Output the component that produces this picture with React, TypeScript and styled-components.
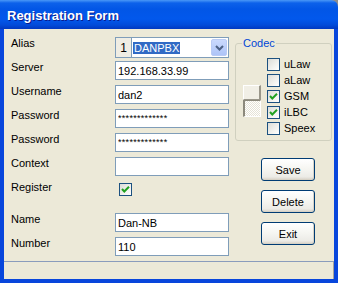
import styled, { createGlobalStyle } from "styled-components";

const GlobalStyle = createGlobalStyle`
  html, body {
    margin: 0;
    padding: 0;
    background: #8c8c8c;
  }
  body {
    font-family: "Liberation Sans", Arial, sans-serif;
    font-size: 11px;
  }
`;

const Window = styled.div`
  width: 338px;
  height: 283px;
  display: flex;
  flex-direction: column;
  overflow: hidden;
  border-top-right-radius: 7px;
`;

const TitleBar = styled.div`
  height: 29px;
  flex: none;
  display: flex;
  align-items: center;
  padding: 2px 0 0 7px;
  box-sizing: border-box;
  background: linear-gradient(
    180deg,
    #4a98f7 0px,
    #0c61ea 3px,
    #0256e6 9px,
    #0258ec 19px,
    #024bd9 25px,
    #0138c0 29px
  );
  color: #fff;
  font-family: "Liberation Sans", Arial, sans-serif;
  font-weight: bold;
  font-size: 13px;
  text-shadow: 1px 1px 0 #0a1a8c;
`;

const Frame = styled.div`
  flex: 1;
  display: flex;
  flex-direction: column;
  border: 4px solid #0846dc;
  border-top: none;
  box-shadow: inset 1px 0 0 #1459e8, inset -1px 0 0 #1459e8;
`;

const Body = styled.div`
  height: 232px;
  display: flex;
  background: #ece9d8;
`;

const FormColumn = styled.div`
  display: flex;
  flex-direction: column;
  padding: 8px 0 0 7px;
`;

const Row = styled.div<{ $height?: number; $mb?: number }>`
  display: flex;
  height: ${({ $height }) => $height ?? 19}px;
  margin-bottom: ${({ $mb }) => $mb ?? 5}px;
`;

const Label = styled.span`
  width: 104px;
  line-height: 13px;
  color: #000;
`;

const TextBox = styled.input<{ $small?: boolean }>`
  width: 114px;
  height: 19px;
  box-sizing: border-box;
  margin: 0;
  border: 1px solid #7f9db9;
  background: #fff;
  padding: ${({ $small }) => ($small ? "0 2px 2px" : "0 2px")};
  font-family: "Liberation Sans", Arial, sans-serif;
  font-size: ${({ $small }) => ($small ? "9px" : "11px")};
  letter-spacing: ${({ $small }) => ($small ? "0.3px" : "0")};
  color: #000;
  outline: none;
`;

const Combo = styled.div`
  width: 114px;
  height: 21px;
  box-sizing: border-box;
  border: 1px solid #7f9db9;
  display: flex;
  background: #fff;
`;

const ComboIndex = styled.div`
  width: 15px;
  border-right: 1px solid #7f9db9;
  background: #efede4;
  display: flex;
  align-items: center;
  justify-content: center;
  font-size: 12px;
`;

const ComboField = styled.div`
  flex: 1;
  display: flex;
  align-items: center;
  justify-content: space-between;
  padding: 0 1px 0 1px;
`;

const Selected = styled.span`
  background: #316ac5;
  color: #fff;
  padding: 0 1px;
  line-height: 12px;
`;

const DropButton = styled.div`
  width: 16px;
  height: 17px;
  box-sizing: border-box;
  border: 1px solid #bacbf5;
  border-radius: 2px;
  background: linear-gradient(180deg, #cad9fd 0%, #b9cdfa 60%, #aec4f7 100%);
  display: flex;
  align-items: center;
  justify-content: center;
`;

const CheckBox = styled.div<{ $checked?: boolean }>`
  width: 13px;
  height: 13px;
  box-sizing: border-box;
  border: 1px solid #1c5180;
  background: linear-gradient(135deg, #dcdcd7 0%, #f2f2ef 60%, #ffffff 100%);
  display: flex;
  align-items: center;
  justify-content: center;
  flex: none;
`;

const RegisterBox = styled.div`
  padding: 2px 0 0 4px;
`;

const SideColumn = styled.div`
  display: flex;
  flex-direction: column;
  padding: 8px 0 0 6px;
`;

const Group = styled.fieldset`
  width: 97px;
  height: 104px;
  box-sizing: border-box;
  margin: 0;
  padding: 6px 0 0 0;
  border: 1px solid #d0d0bf;
  border-radius: 3px;
  display: flex;
  align-items: flex-start;
`;

const Legend = styled.legend`
  margin-left: 6px;
  padding: 0 1px;
  color: #0046d5;
  font-size: 11px;
  line-height: 13px;
`;

const Slider = styled.div`
  display: flex;
  flex-direction: column;
  margin: 29px 0 0 7px;
`;

const SliderUp = styled.div`
  width: 18px;
  height: 15px;
  box-sizing: border-box;
  background: #f1efe6;
  border-top: 1px solid #fff;
  border-left: 1px solid #fff;
  border-right: 2px solid #99968a;
  border-bottom: 1px solid #99968a;
`;

const SliderDown = styled.div`
  width: 18px;
  height: 17px;
  box-sizing: border-box;
  background: repeating-conic-gradient(#ffffff 0 25%, #e6e3d6 0 50%) 0 0 / 2px 2px;
  border-top: 1px solid #8c897c;
  border-left: 2px solid #8c897c;
  border-right: 1px solid #fff;
  border-bottom: 1px solid #fff;
`;

const CodecList = styled.div`
  display: flex;
  flex-direction: column;
  margin-left: 6px;
`;

const CodecRow = styled.div`
  height: 16px;
  display: flex;
  align-items: center;
  gap: 4px;
  color: #000;
`;

const Buttons = styled.div`
  display: flex;
  flex-direction: column;
  gap: 9px;
  margin: 17px 0 0 26px;
`;

const Button = styled.button`
  width: 54px;
  height: 23px;
  margin: 0;
  padding: 0;
  border: 1px solid #003c74;
  border-radius: 3px;
  background: linear-gradient(180deg, #ffffff 0%, #f6f6f2 45%, #ecebe6 85%, #d6d0c5 100%);
  box-shadow: inset -1px -1px 0 #d7d2c6;
  font-family: "Liberation Sans", Arial, sans-serif;
  font-size: 11px;
  color: #000;
`;

const StatusBar = styled.div`
  height: 18px;
  box-sizing: border-box;
  background: #ece9d8;
  border-top: 1px solid #8a9cbc;
  border-right: 1px solid #a5a39a;
`;

function Check() {
  return (
    <svg width="9" height="9" viewBox="0 0 9 9">
      <polyline points="1,4 3.3,6.5 8,1.8" fill="none" stroke="#21a121" strokeWidth="2" />
    </svg>
  );
}

const codecs = [
  { name: "uLaw", on: false },
  { name: "aLaw", on: false },
  { name: "GSM", on: true },
  { name: "iLBC", on: true },
  { name: "Speex", on: false },
];

export default function App() {
  return (
    <Window>
      <GlobalStyle />
      <TitleBar>Registration Form</TitleBar>
      <Frame>
        <Body>
          <FormColumn>
            <Row $height={21} $mb={3}>
              <Label>Alias</Label>
              <Combo>
                <ComboIndex>1</ComboIndex>
                <ComboField>
                  <Selected>DANPBX</Selected>
                  <DropButton>
                    <svg width="9" height="6" viewBox="0 0 9 6">
                      <polyline points="1,1 4.5,4.5 8,1" fill="none" stroke="#4d6185" strokeWidth="2" />
                    </svg>
                  </DropButton>
                </ComboField>
              </Combo>
            </Row>
            <Row>
              <Label>Server</Label>
              <TextBox readOnly defaultValue="192.168.33.99" />
            </Row>
            <Row>
              <Label>Username</Label>
              <TextBox readOnly defaultValue="dan2" />
            </Row>
            <Row>
              <Label>Password</Label>
              <TextBox $small readOnly defaultValue="*************" />
            </Row>
            <Row>
              <Label>Password</Label>
              <TextBox $small readOnly defaultValue="*************" />
            </Row>
            <Row>
              <Label>Context</Label>
              <TextBox readOnly defaultValue="" />
            </Row>
            <Row $mb={13}>
              <Label>Register</Label>
              <RegisterBox>
                <CheckBox $checked>
                  <Check />
                </CheckBox>
              </RegisterBox>
            </Row>
            <Row>
              <Label>Name</Label>
              <TextBox readOnly defaultValue="Dan-NB" />
            </Row>
            <Row $mb={0}>
              <Label>Number</Label>
              <TextBox readOnly defaultValue="110" />
            </Row>
          </FormColumn>
          <SideColumn>
            <Group>
              <Legend>Codec</Legend>
              <Slider>
                <SliderUp />
                <SliderDown />
              </Slider>
              <CodecList>
                {codecs.map((c) => (
                  <CodecRow key={c.name}>
                    <CheckBox $checked={c.on}>{c.on && <Check />}</CheckBox>
                    {c.name}
                  </CodecRow>
                ))}
              </CodecList>
            </Group>
            <Buttons>
              <Button>Save</Button>
              <Button>Delete</Button>
              <Button>Exit</Button>
            </Buttons>
          </SideColumn>
        </Body>
        <StatusBar />
      </Frame>
    </Window>
  );
}
